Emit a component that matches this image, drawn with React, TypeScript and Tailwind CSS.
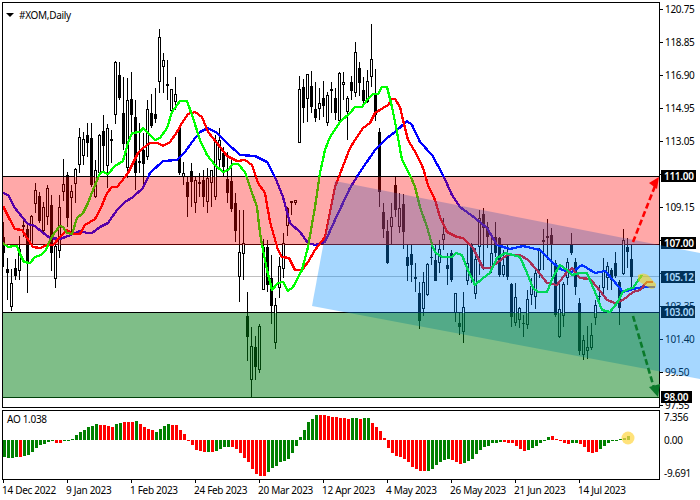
const candles: [number, number, number, number, number][] = [
  [222, 267, 237, 253, 0], [258, 300, 269, 273, 0], [269, 311, 283, 307, 1], [259, 280, 268, 276, 0],
  [236, 280, 249, 271, 1], [218, 237, 225, 227, 0], [225, 293, 229, 263, 0], [215, 247, 216, 245, 1],
  [183, 213, 190, 204, 1], [192, 223, 196, 221, 0], [202, 233, 207, 231, 1], [185, 225, 188, 217, 1],
  [195, 271, 205, 253, 0], [242, 288, 246, 279, 1], [195, 258, 207, 251, 1], [159, 201, 184, 192, 1],
  [172, 227, 175, 218, 0], [185, 233, 191, 198, 1], [168, 203, 169, 184, 1], [128, 173, 137, 165, 1],
  [132, 165, 139, 156, 1], [123, 157, 135, 143, 0], [123, 187, 138, 185, 0], [160, 198, 170, 197, 1],
  [134, 173, 135, 173, 1], [115, 173, 131, 146, 0], [124, 188, 128, 166, 1], [130, 163, 139, 141, 0],
  [61, 124, 62, 115, 1], [62, 100, 75, 98, 0], [77, 150, 113, 144, 0], [78, 178, 100, 168, 1],
  [72, 133, 99, 115, 0], [100, 190, 117, 173, 0], [123, 173, 161, 163, 0], [133, 187, 150, 164, 0],
  [100, 160, 109, 157, 1], [94, 128, 113, 126, 0], [88, 123, 114, 119, 0], [29, 93, 37, 82, 1],
  [53, 93, 60, 67, 1], [60, 100, 84, 86, 0], [89, 113, 89, 111, 1], [77, 110, 94, 102, 1],
  [127, 175, 127, 173, 0], [162, 185, 173, 177, 1], [177, 217, 182, 197, 0], [163, 207, 171, 182, 0],
  [177, 213, 180, 203, 1], [173, 197, 182, 184, 0], [170, 207, 180, 197, 0], [168, 213, 178, 202, 1],
  [170, 207, 170, 183, 1], [135, 200, 140, 197, 1], [128, 170, 140, 160, 1], [147, 177, 153, 167, 0],
  [152, 203, 179, 193, 0], [157, 212, 181, 209, 0], [193, 242, 203, 231, 0], [210, 302, 252, 277, 1],
  [210, 280, 243, 254, 1], [292, 361, 316, 337, 0], [327, 397, 346, 380, 1], [336, 380, 347, 367, 0],
  [324, 373, 326, 370, 1], [239, 290, 247, 290, 1], [240, 292, 247, 285, 0], [255, 324, 278, 306, 0],
  [298, 349, 305, 343, 1], [257, 298, 266, 288, 1], [233, 278, 243, 269, 1], [207, 236, 208, 226, 1],
  [201, 215, 201, 203, 1], [200, 205, 200, 203, 1], [76, 143, 89, 143, 1], [79, 123, 87, 108, 0],
  [74, 122, 74, 99, 1], [71, 113, 86, 107, 0], [82, 122, 109, 118, 0], [88, 120, 103, 109, 1],
  [81, 117, 98, 106, 0], [92, 126, 95, 123, 1], [82, 113, 89, 91, 0], [88, 120, 98, 113, 0],
  [72, 122, 73, 121, 1], [72, 100, 82, 85, 1], [96, 140, 98, 112, 1], [76, 100, 82, 91, 0],
  [42, 97, 52, 93, 1], [62, 96, 68, 83, 0], [77, 107, 90, 101, 0], [70, 103, 81, 102, 1],
  [24, 87, 59, 77, 1], [69, 121, 93, 115, 0], [128, 207, 132, 192, 0], [203, 238, 212, 229, 0],
  [220, 264, 231, 263, 0], [203, 245, 217, 227, 1], [177, 217, 185, 210, 0], [193, 233, 208, 227, 1],
  [194, 249, 204, 232, 0], [245, 281, 257, 266, 0], [245, 282, 254, 265, 0], [263, 292, 277, 279, 0],
  [282, 329, 293, 321, 0], [272, 316, 282, 309, 1], [263, 296, 264, 295, 1], [244, 265, 257, 258, 0],
  [245, 281, 260, 281, 0], [240, 273, 249, 263, 1], [218, 250, 234, 240, 1], [253, 285, 265, 269, 0],
  [250, 282, 253, 280, 0], [293, 322, 293, 313, 1], [313, 335, 323, 327, 0], [292, 343, 307, 332, 1],
  [243, 285, 263, 281, 1], [243, 283, 245, 277, 0], [248, 299, 259, 294, 1], [210, 275, 218, 247, 1],
  [208, 270, 214, 228, 0], [222, 248, 227, 237, 0], [233, 273, 253, 268, 1], [222, 257, 237, 253, 0],
  [237, 277, 238, 275, 0], [250, 277, 265, 275, 1], [245, 280, 253, 277, 0], [283, 327, 284, 317, 0],
  [283, 326, 297, 323, 1], [307, 328, 308, 320, 1], [315, 337, 323, 324, 0], [290, 329, 299, 325, 1],
  [278, 305, 286, 295, 1], [270, 309, 273, 297, 1], [248, 278, 250, 270, 1], [229, 270, 240, 242, 0],
  [219, 260, 236, 238, 0], [228, 277, 235, 244, 0], [260, 317, 263, 315, 0], [281, 338, 309, 337, 1],
  [282, 327, 284, 316, 1], [258, 285, 262, 278, 1], [233, 255, 245, 253, 0], [258, 295, 262, 287, 0],
  [298, 355, 303, 351, 0], [335, 360, 340, 355, 1], [326, 359, 347, 351, 1], [323, 350, 335, 348, 1],
  [300, 325, 305, 318, 1], [285, 307, 296, 297, 0], [258, 297, 270, 288, 1], [262, 290, 266, 278, 1],
  [268, 290, 270, 280, 0], [252, 278, 263, 276, 0], [280, 325, 282, 308, 0], [229, 275, 240, 274, 1],
  [238, 268, 247, 252, 0], [245, 288, 259, 277, 0],
]

const greenLine = '3,243 8,247 14,246 17,246 20,254 24,262 30,263 35,257 41,255 46,250 50,240 55,232 60,226 63,227 67,233 72,234 77,218 83,213 88,203 93,190 100,173 103,172 108,174 115,166 123,161 128,143 132,133 140,132 143,128 148,133 155,140 160,138 167,128 172,112 180,101 187,101 193,118 200,140 207,155 215,165 223,172 228,170 233,164 238,164 245,172 250,187 257,207 260,233 263,250 267,270 272,290 278,283 283,282 288,291 293,287 302,270 308,247 315,207 320,173 325,150 330,137 340,122 350,113 355,107 362,107 367,100 373,94 378,94 382,87 387,87 392,107 397,132 402,160 410,175 415,187 420,207 427,227 433,248 436,253 442,257 452,257 456,253 462,255 467,268 475,285 483,278 490,273 497,258 505,253 513,255 520,257 527,273 533,288 538,292 547,292 553,277 560,265 567,270 572,275 580,273 587,273 595,292 602,310 610,312 617,303 623,292 628,289 633,288 642,275'
const redLine = '3,206 10,220 15,229 22,230 27,238 33,247 40,248 47,245 53,245 60,237 67,230 73,234 80,234 85,225 95,219 100,210 107,193 112,187 117,187 125,177 128,173 133,163 138,153 143,148 150,143 158,143 163,146 170,142 177,132 182,123 188,114 195,112 202,117 208,132 217,143 227,156 237,161 245,160 252,165 258,183 265,193 270,222 278,250 282,257 289,258 295,270 302,270 308,262 315,250 325,237 335,187 350,148 357,137 363,128 370,123 375,113 383,108 388,105 392,99 395,99 400,107 403,120 408,140 417,155 423,168 428,185 435,200 440,217 447,232 457,237 463,238 473,248 483,268 490,268 497,263 507,255 520,255 528,260 537,270 547,283 557,285 567,272 572,268 580,278 590,279 597,287 607,300 615,303 623,300 633,292 640,290 647,282 653,282'
const blueLine = '3,193 8,195 15,208 22,217 28,224 35,226 42,232 50,238 60,239 68,236 75,233 80,231 87,233 92,233 100,227 108,223 117,210 125,202 133,197 143,188 150,173 163,161 177,160 185,152 192,142 200,132 208,128 217,133 227,143 240,155 255,156 267,162 275,177 283,197 290,223 300,232 308,243 315,245 325,242 335,220 350,188 360,172 375,150 387,138 395,132 407,121 412,125 420,142 432,155 443,175 452,195 460,207 475,218 487,228 497,245 510,249 523,246 540,250 553,263 562,270 572,272 582,265 595,273 605,271 613,280 623,292 637,288 647,287 655,287'

const aoBars: [number, number][] = [
  [-17, 1], [-18, 1], [-18, 1], [-17, 1], [-17, 0], [-16, 1], [-15, 1], [-12, 1], [-8, 1], [-5, 1], [-4, 1], [-2, 1], [-1, 1],
  [-3, 0], [-3, 0], [-1, 1], [-1, 1], [1, 1], [5, 1], [8, 1], [10, 1], [13, 1], [14, 1], [16, 1], [15, 0], [15, 0], [14, 0], [13, 0],
  [16, 1], [17, 1], [18, 0], [18, 0], [18, 0], [19, 1], [16, 0], [13, 0], [11, 0], [10, 0], [8, 1], [11, 1], [14, 1], [16, 1],
  [15, 0], [15, 0], [10, 0], [6, 0], [-1, 0], [-5, 0], [-10, 0], [-11, 0], [-12, 0], [-12, 1], [-12, 0], [-11, 1], [-9, 1], [-7, 1], [-7, 1],
  [-7, 0], [-9, 0], [-13, 0], [-18, 0], [-22, 0], [-29, 0], [-34, 0], [-36, 0], [-36, 0], [-32, 1], [-28, 1], [-26, 1], [-22, 1], [-21, 1], [-19, 1], [-13, 1], [-6, 1],
  [3, 1], [10, 1], [18, 1], [21, 1], [25, 1], [25, 0], [25, 0], [24, 0], [23, 0], [23, 0], [22, 0], [22, 0], [21, 0],
  [22, 1], [22, 1], [21, 0], [22, 1], [22, 1], [17, 0], [13, 0], [9, 0], [2, 0], [-8, 0], [-13, 0], [-16, 0], [-17, 0], [-19, 0], [-22, 0], [-27, 0], [-29, 0], [-31, 0], [-31, 0],
  [-31, 1], [-29, 1], [-25, 1], [-22, 1], [-20, 1], [-19, 1], [-20, 0], [-22, 0], [-24, 0], [-23, 1], [-21, 1], [-19, 1], [-14, 1], [-10, 1], [-7, 1], [-6, 1], [-3, 1], [-3, 1], [-2, 1],
  [-2, 0], [-3, 0], [-3, 0], [-6, 0], [-9, 0], [-11, 0], [-10, 1], [-8, 1], [-6, 1], [-3, 1], [-1, 1], [3, 1], [4, 0], [1, 0], [-1, 0], [-3, 0], [-4, 0], [-3, 1], [-3, 1],
  [-4, 0], [-7, 0], [-12, 0], [-13, 0], [-12, 0], [-9, 1], [-6, 1], [-3, 1], [-1, 1], [-1, 1], [1, 1], [2, 1], [4, 1],
]

// ticks that sit fully under a price badge carry no label
const priceTicks = ['120.75', '118.85', '116.90', '114.95', '113.05', '', '109.15', '', '', '103.35', '101.40', '99.50', '97.55']
const dates = ['14 Dec 2022', '9 Jan 2023', '1 Feb 2023', '24 Feb 2023', '20 Mar 2023', '12 Apr 2023', '4 May 2023', '26 May 2023', '21 Jun 2023', '14 Jul 2023']

const MainChart = () => (
  <svg width="656" height="404" viewBox="3 3 656 404" className="block">
    <rect x="3" y="276" width="656" height="1" fill="#c0c0c0" />
    <rect x="3" y="176" width="656" height="1" fill="#000" />
    <rect x="3" y="244" width="656" height="1" fill="#000" />
    <rect x="3" y="312" width="656" height="1" fill="#000" />
    <rect x="3" y="397" width="656" height="1" fill="#000" />
    <g shapeRendering="crispEdges">
      {candles.map(([high, low, top, bot, hollow], i) => {
        const x = 3 + i * 4
        return (
          <g key={i}>
            <rect x={x} y={high} width="1" height={low - high} fill="#000" />
            {hollow ? (
              <rect x={x - 0.5} y={top + 0.5} width="2" height={Math.max(bot - top - 1, 1)} fill="#fff" stroke="#000" strokeWidth="1" />
            ) : (
              <rect x={x - 1} y={top} width="3" height={bot - top} fill="#000" />
            )}
          </g>
        )
      })}
    </g>
    <polyline points={blueLine} fill="none" stroke="#0000ff" strokeWidth="2.3" strokeLinejoin="round" shapeRendering="crispEdges" />
    <polyline points={redLine} fill="none" stroke="#ff0000" strokeWidth="2.3" strokeLinejoin="round" shapeRendering="crispEdges" />
    <polyline points={greenLine} fill="none" stroke="#00ff00" strokeWidth="2.3" strokeLinejoin="round" shapeRendering="crispEdges" />
  </svg>
)

const AoChart = () => (
  <svg width="656" height="68" viewBox="3 411 656 68" className="block">
    <g shapeRendering="crispEdges">
      {aoBars.map(([v, up], i) => (
        <rect key={i} x={3 + i * 4} y={v > 0 ? 440 - v : 440} width="3" height={Math.abs(v)} fill={up ? '#008000' : '#ff0000'} />
      ))}
    </g>
    <circle cx="628" cy="438" r="6.5" fill="#ffd84d" opacity="0.75" />
  </svg>
)

const Overlay = () => (
  <svg width="700" height="500" viewBox="0 0 700 500" className="absolute left-0 top-0 pointer-events-none">
    <polygon points="335,181 700,253 700,379 312,306" fill="#008cff" opacity="0.35" />
    <rect x="3" y="177" width="656" height="68" fill="#ff0000" opacity="0.34" />
    <rect x="3" y="313" width="656" height="85" fill="#007d12" opacity="0.5" />
    <path d="M638 275 Q643 272 648 275 L656 284 Q657 289 651 289 L638 281 Z" fill="#ffd000" opacity="0.55" />
    <line x1="633" y1="242" x2="655" y2="186" stroke="#ff0000" strokeWidth="2.6" strokeDasharray="6 3" />
    <polygon points="659,177 649,183 657,189" fill="#ff0000" />
    <line x1="633" y1="316" x2="654" y2="388" stroke="#0a7a2a" strokeWidth="2.6" strokeDasharray="6 3" />
    <polygon points="658,397 649,387 660,384" fill="#0a7a2a" />
  </svg>
)

const Badge = ({ label, className }: { label: string; className: string }) => (
  <div className={`absolute left-[661px] h-[12px] bg-black text-white font-semibold text-[10px] leading-[12px] pl-[3px] ${className}`}>{label}</div>
)

export default function App() {
  return (
    <div className="relative w-[700px] h-[500px] overflow-hidden bg-white text-black font-['Noto_Sans',sans-serif] text-[10px] tracking-[-0.3px]">
      <div className="flex">
        <div className="w-[660px] pl-[2px] pt-[2px]">
          <div className="relative h-[406px] border border-black">
            <MainChart />
            <div className="absolute left-[3px] top-[6px] flex items-center gap-[5px] leading-[12px]">
              <span className="w-0 h-0 border-x-[4px] border-x-transparent border-t-[4px] border-t-black" />
              <span>#XOM,Daily</span>
            </div>
          </div>
          <div className="relative h-[70px] mt-[2px] border border-black">
            <AoChart />
            <div className="absolute left-[4px] top-[2px] leading-[12px]">AO 1.038</div>
          </div>
          <div className="flex pl-[1px]">
            {dates.map((d) => (
              <div key={d} className="w-[64px] shrink-0">
                <div className="w-px h-[3px] bg-black" />
                <div className="leading-[12px] -ml-px mt-[1px] whitespace-nowrap">{d}</div>
              </div>
            ))}
          </div>
        </div>
        <div className="w-[40px]">
          <div className="flex flex-col h-[410px]">
            <div className="-mt-[7px]">
              {priceTicks.map((p, i) => (
                <div key={i} className="h-[33px] flex items-center gap-[2px] whitespace-nowrap">
                  <span className="w-[3px] h-px bg-black shrink-0" />
                  {p && <span>{p}</span>}
                </div>
              ))}
            </div>
          </div>
          <div className="pl-[4px] leading-[12px]">
            <div className="mt-px">7.356</div>
            <div className="mt-[11px]">0.00</div>
            <div className="mt-[21px]">-9.691</div>
          </div>
        </div>
      </div>
      <Badge label="111.00" className="top-[170px] w-[35px]" />
      <Badge label="107.00" className="top-[237px] w-[35px]" />
      <Badge label="105.12" className="top-[271px] w-[34px]" />
      <Badge label="103.00" className="top-[306px] w-[34px]" />
      <Badge label="98.00" className="top-[391px] w-[31px]" />
      <Overlay />
    </div>
  )
}
